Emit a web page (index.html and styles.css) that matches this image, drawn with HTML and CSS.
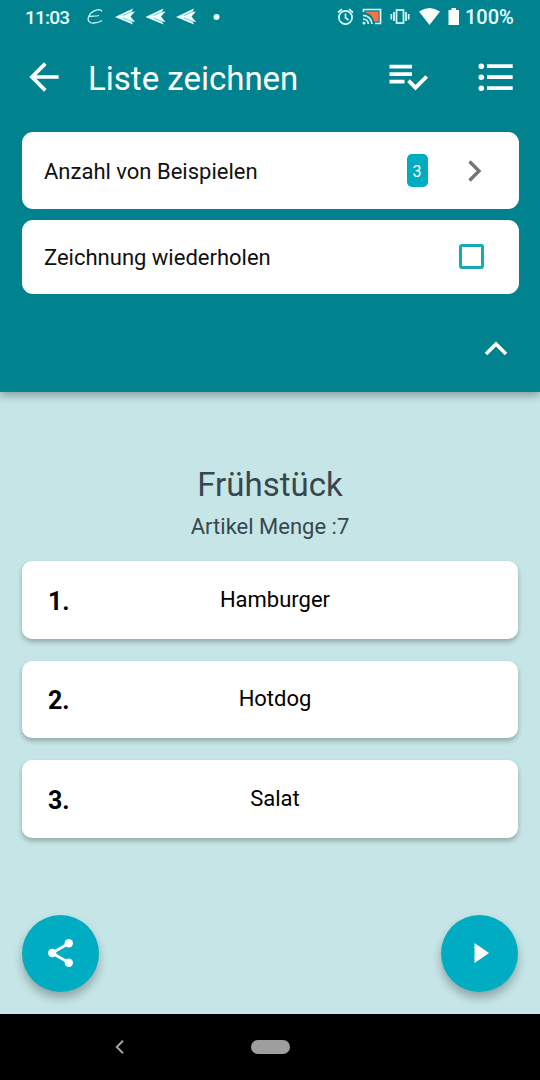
FILE: index.html
```html
<!DOCTYPE html>
<html lang="de">
<head>
    <meta charset="UTF-8">
    <meta name="viewport" content="width=device-width, initial-scale=1.0">
    <title>Liste zeichnen</title>
    <link rel="stylesheet" href="styles.css">
</head>
<body>
    <header class="header">
        <div class="status-bar">
            <span class="time">11:03</span>
            <svg class="notifications" width="136" height="20" viewBox="86 7 136 20">
                <path d="M102 11.500C101 8 92 10 89 16C86.500 21 90 23.500 94 23C98 22.800 100 22 102 20.500M89.500 16.500C93 16 96 16.500 99 15.500" fill="none" stroke="#c4f3f5" stroke-width="1.300"/>
                <g id="plane">
                    <path d="M115 17L133 8.500L131.500 12L135 11.500L130.500 16.500L135 22L131.500 21.500L133 24.500Z" fill="#e8ffff"/>
                    <path d="M123 15.500L133 11M123 18L133 22" stroke="#4fa9b0" stroke-width=".7"/>
                </g>
                <use href="#plane" x="30.500"/>
                <use href="#plane" x="61"/>
                <circle cx="216.500" cy="17" r="3" fill="#e8ffff"/>
            </svg>
            <svg class="system-icons" width="126" height="20" viewBox="336 7 126 20">
                <g fill="none" stroke="#d8fcfd" stroke-width="1.700">
                    <circle cx="345.500" cy="17.500" r="6.600"/>
                    <path d="M345.500 13.500V17.800L348.500 20M338 12.500L342 9.200M353 12.500L349 9.200"/>
                    <path d="M363.500 12V9.500H380.500V23.500H375"/>
                    <path d="M363 15.300A9 9 0 0 1 372 24M363 19A5.300 5.300 0 0 1 368.300 24"/>
                    <rect x="396.500" y="10" width="7" height="13"/>
                    <path d="M394 12V21M406 12V21M391.300 14V19.500M408.700 14V19.500"/>
                </g>
                <path d="M366 11.500H378.500V21.500H374C373 16 370 13.500 366 13Z" fill="#ff7043"/>
                <circle cx="364" cy="23" r="1.500" fill="#d8fcfd"/>
                <path d="M419 11.500Q429.500 4.500 440 11.500L429.500 25Z" fill="#fff"/>
                <path d="M448.500 10H451.500V8H456V10H459V25H448.500Z" fill="#fff"/>
            </svg>
            <span class="battery">100%</span>
        </div>

        <div class="toolbar">
            <svg class="back" width="44" height="44" viewBox="0 0 24 24">
                <path d="M20 11H7.830l5.590-5.590L12 4l-8 8 8 8 1.410-1.410L7.830 13H20v-2z" fill="#fff"/>
            </svg>
            <h1>Liste zeichnen</h1>
            <svg class="check-list" width="40" height="28" viewBox="389 64 40 28">
                <path d="M389.500 67.700H412M389.500 75.200H412M389.500 82.600H404.500M408.500 81.700L415.500 88.700L426.700 77.500" fill="none" stroke="#fff" stroke-width="3.800"/>
            </svg>
            <svg class="bullet-list" width="36" height="30" viewBox="478 62 36 30">
                <path d="M487 66.200H512.700M487 77.200H512.700M487 88.200H512.700" stroke="#fff" stroke-width="3.800"/>
                <g fill="#fff">
                    <circle cx="481.300" cy="66.200" r="2.800"/>
                    <circle cx="481.300" cy="77.200" r="2.800"/>
                    <circle cx="481.300" cy="88.200" r="2.800"/>
                </g>
            </svg>
        </div>

        <div class="options">
            <div class="option option-count">
                <span>Anzahl von Beispielen</span>
                <span class="count">3</span>
                <svg class="chevron" width="14" height="22" viewBox="0 0 14 22">
                    <path d="M1.500 1.500L11 11L1.500 20.500" fill="none" stroke="#757575" stroke-width="3.400"/>
                </svg>
            </div>
            <div class="option option-repeat">
                <span>Zeichnung wiederholen</span>
                <span class="checkbox"></span>
            </div>
        </div>

        <svg class="collapse" width="24" height="16" viewBox="0 0 24 16">
            <path d="M2 13L12 3L22 13" fill="none" stroke="#fff" stroke-width="3.600"/>
        </svg>
    </header>

    <main class="content">
        <h2>Frühstück</h2>
        <p class="amount">Artikel Menge :7</p>
        <div class="list">
            <div class="item"><b>1.</b><span>Hamburger</span></div>
            <div class="item"><b>2.</b><span>Hotdog</span></div>
            <div class="item"><b>3.</b><span>Salat</span></div>
        </div>
        <div class="actions">
            <div class="fab">
                <svg width="28" height="30" viewBox="0 0 28 30">
                    <path d="M21.500 5.500L5 15L21.500 24.500" fill="none" stroke="#fff" stroke-width="2.800"/>
                    <g fill="#fff">
                        <circle cx="21.800" cy="5.300" r="4.200"/>
                        <circle cx="5.200" cy="15" r="4.200"/>
                        <circle cx="21.800" cy="24.700" r="4.200"/>
                    </g>
                </svg>
            </div>
            <div class="fab">
                <svg width="16" height="20" viewBox="0 0 16 20">
                    <path d="M1.500 0L16 10L1.500 20Z" fill="#fff"/>
                </svg>
            </div>
        </div>
    </main>

    <footer class="nav-bar">
        <svg width="9" height="14" viewBox="0 0 9 14">
            <path d="M8 .8L1.800 7L8 13.200" fill="none" stroke="#a0a0a0" stroke-width="2"/>
        </svg>
        <span class="home"></span>
    </footer>
</body>
</html>
```
FILE: styles.css
```css
* {
    box-sizing: border-box;
}
body {
    margin: 0;
    height: 1080px;
    display: flex;
    flex-direction: column;
    font-family: Roboto, sans-serif;
    background: #c6e5e6;
    color: #111;
    overflow: hidden;
}
svg {
    display: block;
    flex-shrink: 0;
}
.header {
    height: 392px;
    background: #00838f;
    color: #fff;
    box-shadow: 0 3px 9px rgba(0, 0, 0, 0.35);
    flex-shrink: 0;
}
.status-bar {
    height: 34px;
    padding: 0 25px;
    display: flex;
    align-items: center;
    color: #e8ffff;
    font-size: 19px;
    font-weight: 500;
}
.time {
    width: 61px;
    letter-spacing: -0.8px;
}
.system-icons {
    margin-left: 114px;
}
.battery {
    margin-left: 3px;
    font-size: 20px;
}
.toolbar {
    height: 87px;
    padding: 0 26px 1px 22px;
    display: flex;
    align-items: center;
}
.toolbar h1 {
    margin: 3px 0 0 22px;
    font-size: 33px;
    font-weight: 400;
    flex: 1;
}
.check-list {
    margin-right: 49px;
}
.options {
    padding: 11px 21.500px 0 22px;
    display: flex;
    flex-direction: column;
    gap: 11px;
}
.option {
    padding: 0 35px 0 22px;
    display: flex;
    align-items: center;
    border-radius: 11px;
    background: #fff;
    color: #111;
    font-size: 22px;
}
.option span:first-child {
    flex: 1;
    padding-top: 2px;
}
.option-count {
    height: 77px;
}
.option-repeat {
    height: 73.500px;
}
.count {
    width: 21px;
    height: 33px;
    line-height: 35px;
    margin-right: 40px;
    border-radius: 5px;
    background: #00acc1;
    color: #fff;
    font-size: 16px;
    text-align: center;
}
.chevron {
    margin-right: 2px;
}
.checkbox {
    width: 25px;
    height: 25px;
    border: 3px solid #17a9b6;
    border-radius: 3px;
}
.collapse {
    margin: 47px 32px 0 auto;
}
.content {
    flex: 1;
    padding: 73px 22px 0;
    text-align: center;
}
.content h2 {
    margin: 0;
    line-height: 40px;
    font-size: 33px;
    font-weight: 400;
    color: #37474f;
}
.amount {
    margin: 9px 0 21px;
    line-height: 26px;
    font-size: 22px;
    color: #37474f;
}
.list {
    display: flex;
    flex-direction: column;
    gap: 22px;
}
.item {
    height: 77.500px;
    padding: 0 26px;
    display: flex;
    align-items: center;
    border-radius: 10px;
    background: #fff;
    color: #000;
    font-size: 22px;
    box-shadow: 0 3px 5px rgba(0, 0, 0, 0.26);
}
.item b {
    width: 32px;
    padding-top: 3px;
    text-align: left;
    font-size: 25px;
}
.item span {
    flex: 1;
    margin-right: 22px;
    padding-bottom: 1px;
}
.actions {
    margin-top: 77px;
    display: flex;
    justify-content: space-between;
}
.fab {
    width: 77px;
    height: 77px;
    display: flex;
    align-items: center;
    justify-content: center;
    border-radius: 50%;
    background: #00acc1;
    box-shadow: 0 6px 10px rgba(0, 0, 0, 0.28);
}
.fab:last-child {
    padding-left: 2px;
}
.nav-bar {
    height: 66px;
    padding-left: 115px;
    display: flex;
    align-items: center;
    background: #000;
}
.home {
    width: 39px;
    height: 14px;
    margin-left: 127px;
    border-radius: 7px;
    background: #9e9e9e;
}
```
